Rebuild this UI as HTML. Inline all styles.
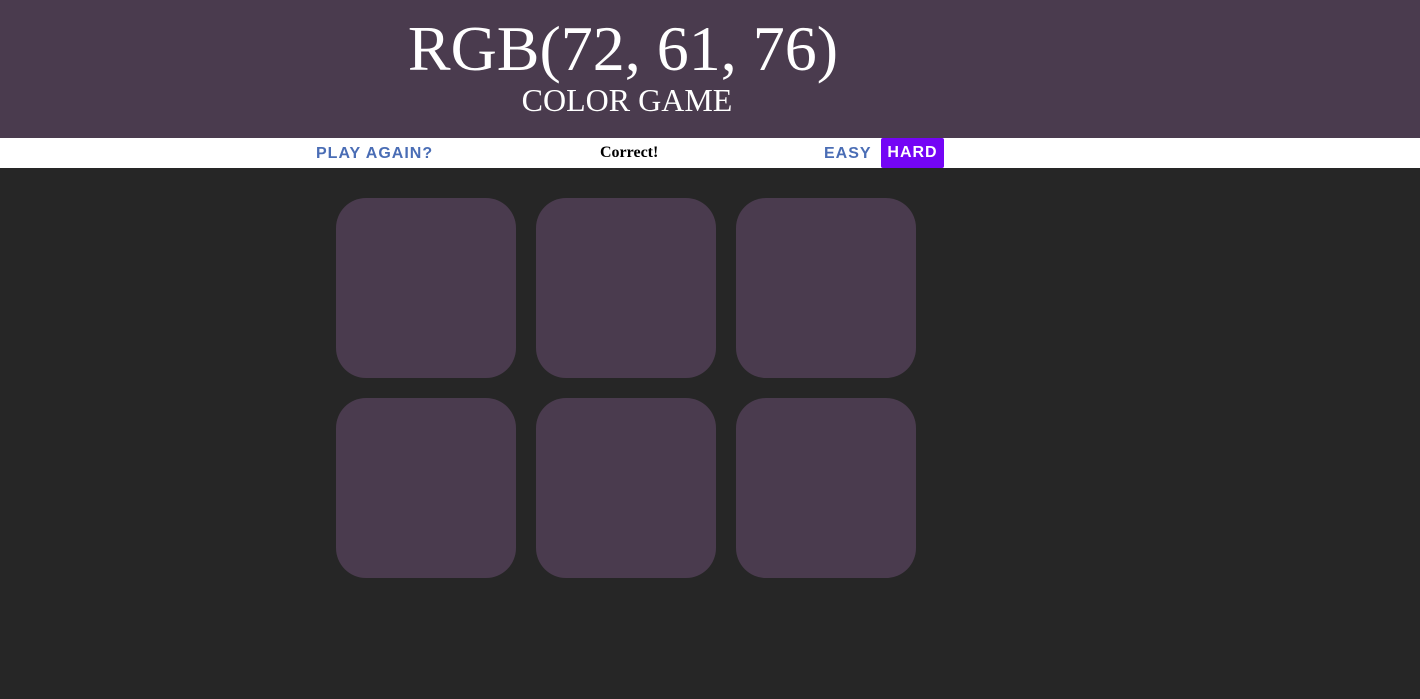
<!DOCTYPE html>
<html><head><style>
body{margin:0;background:#262626;width:1420px;height:699px;overflow:hidden;position:relative;font-family:"Liberation Sans",sans-serif}
#hdr{position:absolute;left:0;top:0;width:1420px;height:138px;background:#4a3b4e;color:#fff;font-family:"Liberation Serif",serif}
#t1{position:absolute;left:0;width:1246px;text-align:center;top:12px;font-size:64px;line-height:74px}
#t2{position:absolute;left:0;width:1254px;text-align:center;top:81px;font-size:32px;line-height:38px}
#bar{position:absolute;top:138px;left:0;width:1420px;height:30px;background:#fff}
.b{position:absolute;top:1px;height:30px;line-height:30px;font-weight:bold;font-size:16px;letter-spacing:1px;color:#4a6db5}
#msg{position:absolute;left:600px;top:0;line-height:30px;font-family:"Liberation Serif",serif;font-weight:bold;font-size:16px}
.sq{position:absolute;width:180px;height:180px;border-radius:30px;background:#4a3b4e}
</style></head><body>
<div id="hdr"><div id="t1">RGB(72, 61, 76)</div><div id="t2">COLOR GAME</div></div>
<div id="bar">
<div class="b" style="left:316px">PLAY AGAIN?</div>
<div id="msg">Correct!</div>
<div class="b" style="left:824px">EASY</div>
<div class="b" style="left:881px;top:0;line-height:30px;width:63px;text-align:center;background:#7405f5;color:#fff;border-radius:2px;letter-spacing:1px">HARD</div>
</div>
<div class="sq" style="left:336px;top:198px"></div>
<div class="sq" style="left:536px;top:198px"></div>
<div class="sq" style="left:736px;top:198px"></div>
<div class="sq" style="left:336px;top:398px"></div>
<div class="sq" style="left:536px;top:398px"></div>
<div class="sq" style="left:736px;top:398px"></div>
</body></html>
